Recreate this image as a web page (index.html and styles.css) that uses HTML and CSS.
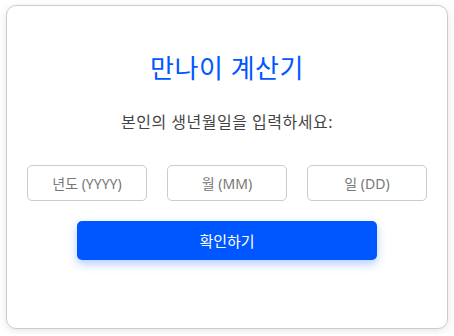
FILE: index.html
```html
<!DOCTYPE html>
<html lang="ko">
<head>
    <meta charset="UTF-8">
    <meta name="viewport" content="width=device-width, initial-scale=1.0">
    <title>만나이 계산기</title>
    <link rel="stylesheet" href="styles.css">
</head>
<body>
    <div class="container">
        <h1>만나이 계산기</h1>
        <p class="guide">본인의 생년월일을 입력하세요:</p>
        <div class="inputs">
            <input type="number" id="year" placeholder="년도 (YYYY)">
            <input type="number" id="month" placeholder="월 (MM)">
            <input type="number" id="day" placeholder="일 (DD)">
        </div>
        <button type="button" class="calc-btn">확인하기</button>
        <p id="result"></p>
    </div>
</body>
</html>
```

FILE: styles.css
```css
body {
    font-family: "Noto Sans", "Noto Sans CJK KR", sans-serif;
    background-color: #fff;
    margin: 0;
    padding: 5px 6px;
}

.container {
    background-color: #fff;
    border: 1px solid #ccc;
    border-radius: 10px;
    box-shadow: 0 2px 8px rgba(0, 0, 0, 0.1);
    padding: 20px;
    height: 282px;
    text-align: center;
}

h1 {
    color: #0057ff;
    font-size: 26px;
    font-weight: normal;
    letter-spacing: 0.5px;
    line-height: 36px;
    margin: 24px 0 25px;
}

.guide {
    color: #444;
    font-size: 16px;
    letter-spacing: 0.5px;
    line-height: 22px;
    margin: 0 0 32px;
}

.inputs {
    display: flex;
    gap: 20px;
    margin-bottom: 20px;
}

.inputs input {
    width: 120px;
    height: 36px;
    box-sizing: border-box;
    padding: 0;
    border: 1px solid #ccc;
    border-radius: 5px;
    font-family: inherit;
    font-size: 14px;
    text-align: center;
    color: #333;
    -moz-appearance: textfield;
}

/* hide the number spinner so the text stays centred */
.inputs input::-webkit-inner-spin-button,
.inputs input::-webkit-outer-spin-button {
    -webkit-appearance: none;
    margin: 0;
}

.inputs input::placeholder {
    color: #777;
}

.calc-btn {
    width: 300px;
    height: 39px;
    background-color: #0057ff;
    color: #fff;
    border: none;
    border-radius: 5px;
    font-family: inherit;
    font-size: 15px;
    box-shadow: 0 4px 10px rgba(0, 87, 255, 0.3);
    cursor: pointer;
}

#result {
    margin: 20px 0 0;
}
```
